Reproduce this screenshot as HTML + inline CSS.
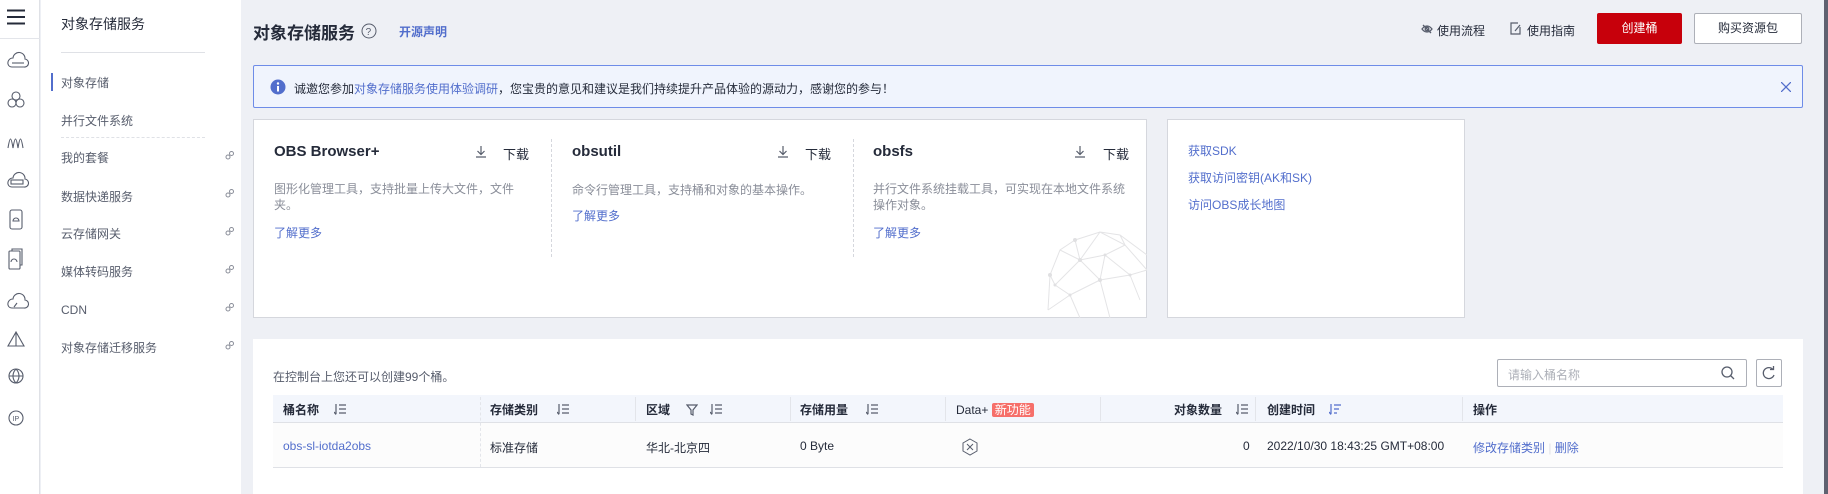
<!DOCTYPE html>
<html><head><meta charset="utf-8"><style>
*{margin:0;padding:0;box-sizing:border-box}
body{width:1828px;height:494px;overflow:hidden;background:#eef0f5;font-family:"Liberation Sans","Noto Sans CJK SC",sans-serif;font-size:12px;color:#252b3a;position:relative}
.a{position:absolute;white-space:nowrap}
.blue{color:#526ecc}
.gray{color:#8a8e99}
.strip{left:0;top:0;width:40px;height:494px;background:#fff;border-right:1px solid #dfe1e6}
.nav{left:41px;top:0;width:200px;height:494px;background:#fff}
.ni{left:20px;font-size:12px;color:#575d6c;line-height:16px}
.card{background:#fff;border:1px solid #d5d7dd}
.hd{top:395px;height:28px;background:#f3f6fc;border-bottom:1px solid #dfe1e6}
.hc{top:401px;font-size:12px;color:#252b3a;font-weight:bold}
.cd{top:397px;width:0;height:24px;border-left:1px solid #e3e5ea}
.so{position:absolute;top:403px}
.ct{font-size:15px;color:#252b3a;font-weight:bold}
</style></head><body>
<div class="a strip">
<svg class="a" style="left:7px;top:9px" width="18" height="16"><path d="M0 1.5h18M0 8h18M0 14.5h18" stroke="#252b3a" stroke-width="2"/></svg>
<div class="a" style="left:0;top:38px;width:40px;border-top:1px solid #e3e5ea"></div>
<svg class="a" style="left:0;top:50px" width="40" height="390" fill="none" stroke="#575d6c" stroke-width="1.1">
<path d="M8 14a5 5 0 0 1 5-6a6 6 0 0 1 12 1a4 4 0 0 1 -1 8h-12a4 4 0 0 1-4-3z"/><path d="M12 13h12"/>
<circle cx="16" cy="46" r="4"/><circle cx="12" cy="53" r="4"/><circle cx="20" cy="53" r="4"/>
<path d="M8 98c2-12 3-12 5 0c2-12 3-12 5 0c2-12 3-12 5 0" />
<path d="M8 134a5 5 0 0 1 5-6a6 6 0 0 1 12 1a4 4 0 0 1 -1 8h-12a4 4 0 0 1-4-3z"/><rect x="11" y="130" width="12" height="4"/>
<rect x="10" y="160" width="12" height="19" rx="2"/><path d="M13 171a3 3 0 0 1 6 0z"/>
<rect x="9" y="201" width="11" height="18" rx="1"/><path d="M12 201v-2h10v16h-2M11 212a3 3 0 0 1 6 0"/>
<path d="M8 255a5 5 0 0 1 5-6a6 6 0 0 1 12 1a4 4 0 0 1 -1 8h-12a4 4 0 0 1-4-3zM14 257l3-4"/>
<path d="M16 282l-8 14h16zM16 282v14"/>
<circle cx="16" cy="326" r="7"/><path d="M9 326h14M16 319c-4 4-4 10 0 14M16 319c4 4 4 10 0 14"/>
<circle cx="16" cy="368" r="7"/><text x="12.5" y="371" font-size="7" fill="#575d6c" stroke="none" font-family="Liberation Sans">IP</text>
</svg>
</div>
<div class="a nav">
<div class="a" style="left:20px;top:14px;font-size:14px;color:#252b3a">对象存储服务</div>
<div class="a" style="left:20px;top:52px;width:144px;border-top:1px solid #dfe1e6"></div>
<div class="a" style="left:10px;top:73px;width:2px;height:18px;background:#526ecc"></div>
<div class="a ni blue" style="top:75px">对象存储</div>
<div class="a ni" style="top:113px">并行文件系统</div>
<div class="a" style="left:20px;top:137px;width:144px;border-top:1px dashed #dfe1e6"></div>
<div class="a ni" style="top:150px">我的套餐</div>
<div class="a ni" style="top:189px">数据快递服务</div>
<div class="a ni" style="top:226px">云存储网关</div>
<div class="a ni" style="top:264px">媒体转码服务</div>
<div class="a ni" style="top:302px">CDN</div>
<div class="a ni" style="top:340px">对象存储迁移服务</div>
<svg class="a" style="left:184px;top:150px" width="10" height="210" fill="none" stroke="#8a8e99" stroke-width="1"><g id="l"><circle cx="3" cy="7" r="2"/><circle cx="6.5" cy="3.5" r="2"/></g><use href="#l" y="38"/><use href="#l" y="76"/><use href="#l" y="114"/><use href="#l" y="152"/><use href="#l" y="190"/></svg>
</div>
<div class="a" style="left:253px;top:19px;font-size:17px;font-weight:bold;color:#252b3a">对象存储服务</div>
<svg class="a" style="left:361px;top:23px" width="16" height="16"><circle cx="8" cy="8" r="7" fill="none" stroke="#575d6c"/><text x="4.6" y="12" font-size="10" fill="#575d6c" font-family="Liberation Sans">?</text></svg>
<div class="a blue" style="left:399px;top:23px;font-size:12px;font-weight:bold">开源声明</div>
<svg class="a" style="left:1421px;top:23px" width="12" height="12" fill="none" stroke="#575d6c" stroke-width="1.3"><path d="M1 6c3-4 7-4 10 0c-3 4-7 4-10 0z"/><circle cx="6" cy="6" r="1.8"/><path d="M2 2l8 8"/></svg>
<div class="a" style="left:1437px;top:22px;font-size:12px">使用流程</div>
<svg class="a" style="left:1510px;top:22px" width="12" height="13" fill="none" stroke="#575d6c" stroke-width="1.2"><path d="M8 1H1v11h9V5"/><path d="M5 9l5-6"/></svg>
<div class="a" style="left:1527px;top:22px;font-size:12px">使用指南</div>
<div class="a" style="left:1597px;top:13px;width:85px;height:31px;background:#c7000b;border-radius:2px;color:#fff;text-align:center;line-height:31px;font-size:12px">创建桶</div>
<div class="a" style="left:1694px;top:13px;width:108px;height:31px;background:#fff;border:1px solid #adb0b8;border-radius:2px;text-align:center;line-height:29px;font-size:12px">购买资源包</div>
<div class="a" style="left:253px;top:65px;width:1550px;height:43px;background:#f0f4fd;border:1px solid #6e8ce8;border-radius:2px"></div>
<svg class="a" style="left:270px;top:79px" width="16" height="16"><circle cx="8" cy="8" r="7.5" fill="#526ecc"/><rect x="7" y="7" width="2" height="5.5" fill="#fff"/><circle cx="8" cy="4.5" r="1.2" fill="#fff"/></svg>
<div class="a" style="left:294px;top:80px;font-size:12px;color:#252b3a">诚邀您参加<span class="blue">对象存储服务使用体验调研</span>，您宝贵的意见和建议是我们持续提升产品体验的源动力，感谢您的参与！</div>
<svg class="a" style="left:1781px;top:82px" width="10" height="10" stroke="#526ecc" stroke-width="1.3"><path d="M0 0L10 10M10 0L0 10"/></svg>
<div class="a card" style="left:253px;top:119px;width:894px;height:199px"></div>
<svg class="a" style="left:1040px;top:230px" width="107" height="88" fill="none" stroke="#e4e4e6" stroke-width="1"><path d="M35 10L60 2L80 5L107 25M35 10L20 20L10 45L8 80M35 10L40 30L60 2L85 15L80 5M40 30L20 20M40 30L15 55L10 45M40 30L65 25L85 15L107 40M65 25L60 50L40 30M60 50L30 65L15 55M60 50L90 45L107 40M60 50L70 88M30 65L8 80M30 65L40 88M90 45L100 70M65 25L90 45"/><g fill="#e0e0e2" stroke="none"><circle cx="35" cy="10" r="2"/><circle cx="40" cy="30" r="2"/><circle cx="60" cy="50" r="2"/><circle cx="65" cy="25" r="1.5"/><circle cx="90" cy="45" r="1.5"/><circle cx="15" cy="55" r="1.5"/><circle cx="30" cy="65" r="1.5"/><circle cx="10" cy="45" r="2"/></g></svg>
<div class="a" style="left:551px;top:139px;height:118px;border-left:1px dashed #d5d7dd"></div>
<div class="a" style="left:853px;top:139px;height:118px;border-left:1px dashed #d5d7dd"></div>
<div class="a ct" style="left:274px;top:143px">OBS Browser+</div>
<div class="a ct" style="left:572px;top:143px">obsutil</div>
<div class="a ct" style="left:873px;top:143px">obsfs</div>
<svg class="a" style="left:475px;top:145px" width="12" height="14" fill="none" stroke="#575d6c" stroke-width="1.2"><path d="M6 1v8M2.5 6l3.5 3.5L9.5 6M1 12h10"/></svg>
<svg class="a" style="left:777px;top:145px" width="12" height="14" fill="none" stroke="#575d6c" stroke-width="1.2"><path d="M6 1v8M2.5 6l3.5 3.5L9.5 6M1 12h10"/></svg>
<svg class="a" style="left:1074px;top:145px" width="12" height="14" fill="none" stroke="#575d6c" stroke-width="1.2"><path d="M6 1v8M2.5 6l3.5 3.5L9.5 6M1 12h10"/></svg>
<div class="a" style="left:503px;top:144px;font-size:13px">下载</div>
<div class="a" style="left:805px;top:144px;font-size:13px">下载</div>
<div class="a" style="left:1103px;top:144px;font-size:13px">下载</div>
<div class="a gray" style="left:274px;top:181px;line-height:16px;font-size:12px">图形化管理工具，支持批量上传大文件，文件<br>夹。</div>
<div class="a blue" style="left:274px;top:224px;font-size:12px">了解更多</div>
<div class="a gray" style="left:572px;top:181px;font-size:12px">命令行管理工具，支持桶和对象的基本操作。</div>
<div class="a blue" style="left:572px;top:207px;font-size:12px">了解更多</div>
<div class="a gray" style="left:873px;top:181px;line-height:16px;font-size:12px">并行文件系统挂载工具，可实现在本地文件系统<br>操作对象。</div>
<div class="a blue" style="left:873px;top:224px;font-size:12px">了解更多</div>
<div class="a card" style="left:1167px;top:119px;width:298px;height:199px"></div>
<div class="a blue" style="left:1188px;top:142px">获取SDK</div>
<div class="a blue" style="left:1188px;top:169px">获取访问密钥(AK和SK)</div>
<div class="a blue" style="left:1188px;top:196px">访问OBS成长地图</div>
<div class="a" style="left:253px;top:339px;width:1550px;height:155px;background:#fff"></div>
<div class="a gray" style="left:273px;top:368px;color:#575d6c">在控制台上您还可以创建99个桶。</div>
<div class="a" style="left:1497px;top:359px;width:250px;height:28px;border:1px solid #adb0b8;border-radius:2px;background:#fff"></div>
<div class="a" style="left:1508px;top:366px;color:#adb0b8">请输入桶名称</div>
<svg class="a" style="left:1721px;top:366px" width="14" height="14" fill="none" stroke="#575d6c" stroke-width="1.3"><circle cx="6" cy="6" r="5"/><path d="M9.5 9.5L13 13"/></svg>
<div class="a" style="left:1756px;top:359px;width:26px;height:28px;border:1px solid #adb0b8;border-radius:2px"></div>
<svg class="a" style="left:1762px;top:366px" width="14" height="14" fill="none" stroke="#575d6c" stroke-width="1.3"><path d="M11 3.5A5.5 5.5 0 1 0 12 9"/><path d="M8 3.5h3.5V0"/></svg>
<div class="a hd" style="left:273px;width:1510px"></div>
<div class="a" style="left:273px;top:423px;width:1510px;height:45px;background:#fcfcfc;border-bottom:1px solid #dfe1e6"></div>
<div class="a" style="left:480px;top:397px;height:70px;border-left:1px dashed #e3e5ea"></div>
<div class="a cd" style="left:635px"></div><div class="a cd" style="left:790px"></div><div class="a cd" style="left:945px"></div><div class="a cd" style="left:1100px"></div><div class="a cd" style="left:1255px"></div><div class="a cd" style="left:1462px"></div>
<div class="a hc" style="left:283px">桶名称</div>
<div class="a hc" style="left:490px">存储类别</div>
<div class="a hc" style="left:646px">区域</div>
<div class="a hc" style="left:800px">存储用量</div>
<div class="a hc" style="left:956px;font-weight:normal">Data+ <span style="background:#f66f6a;color:#fff;padding:0 3px;border-radius:2px">新功能</span></div>
<div class="a hc" style="left:1174px">对象数量</div>
<div class="a hc" style="left:1267px">创建时间</div>
<div class="a hc" style="left:1473px">操作</div>
<svg class="so" style="left:334px" width="13" height="13" fill="none" stroke="#575d6c" stroke-width="1.2"><path d="M2 1v10M0 9l2 2.5M5 2h7M5 6h7M5 10h7"/></svg>
<svg class="so" style="left:557px" width="13" height="13" fill="none" stroke="#575d6c" stroke-width="1.2"><path d="M2 1v10M0 9l2 2.5M5 2h7M5 6h7M5 10h7"/></svg>
<svg class="so" style="left:686px" width="12" height="13" fill="none" stroke="#575d6c" stroke-width="1.2"><path d="M1 2h10l-4 5v5l-2-1v-4z"/></svg>
<svg class="so" style="left:710px" width="13" height="13" fill="none" stroke="#575d6c" stroke-width="1.2"><path d="M2 1v10M0 9l2 2.5M5 2h7M5 6h7M5 10h7"/></svg>
<svg class="so" style="left:866px" width="13" height="13" fill="none" stroke="#575d6c" stroke-width="1.2"><path d="M2 1v10M0 9l2 2.5M5 2h7M5 6h7M5 10h7"/></svg>
<svg class="so" style="left:1236px" width="13" height="13" fill="none" stroke="#575d6c" stroke-width="1.2"><path d="M2 1v10M0 9l2 2.5M5 2h7M5 6h7M5 10h7"/></svg>
<svg class="so" style="left:1329px" width="13" height="13" fill="none" stroke="#526ecc" stroke-width="1.2"><path d="M2 1v10M0 9l2 2.5M5 2h7M5 6h5M5 10h3"/></svg>
<div class="a blue" style="left:283px;top:439px">obs-sl-iotda2obs</div>
<div class="a" style="left:490px;top:439px">标准存储</div>
<div class="a" style="left:646px;top:439px">华北-北京四</div>
<div class="a" style="left:800px;top:439px">0 Byte</div>
<svg class="a" style="left:962px;top:438px" width="16" height="18" fill="none" stroke="#575d6c" stroke-width="1"><path d="M8 1l7 4v8l-7 4l-7-4V5z"/><path d="M5 6l6 6M11 6l-6 6"/></svg>
<div class="a" style="left:1243px;top:439px">0</div>
<div class="a" style="left:1267px;top:439px">2022/10/30 18:43:25 GMT+08:00</div>
<div class="a blue" style="left:1473px;top:439px">修改存储类别 <span style="color:#dfe1e6">|</span> 删除</div>
<div class="a" style="left:1824px;top:0;width:4px;height:494px;background:#5f6170"></div>
</body></html>
